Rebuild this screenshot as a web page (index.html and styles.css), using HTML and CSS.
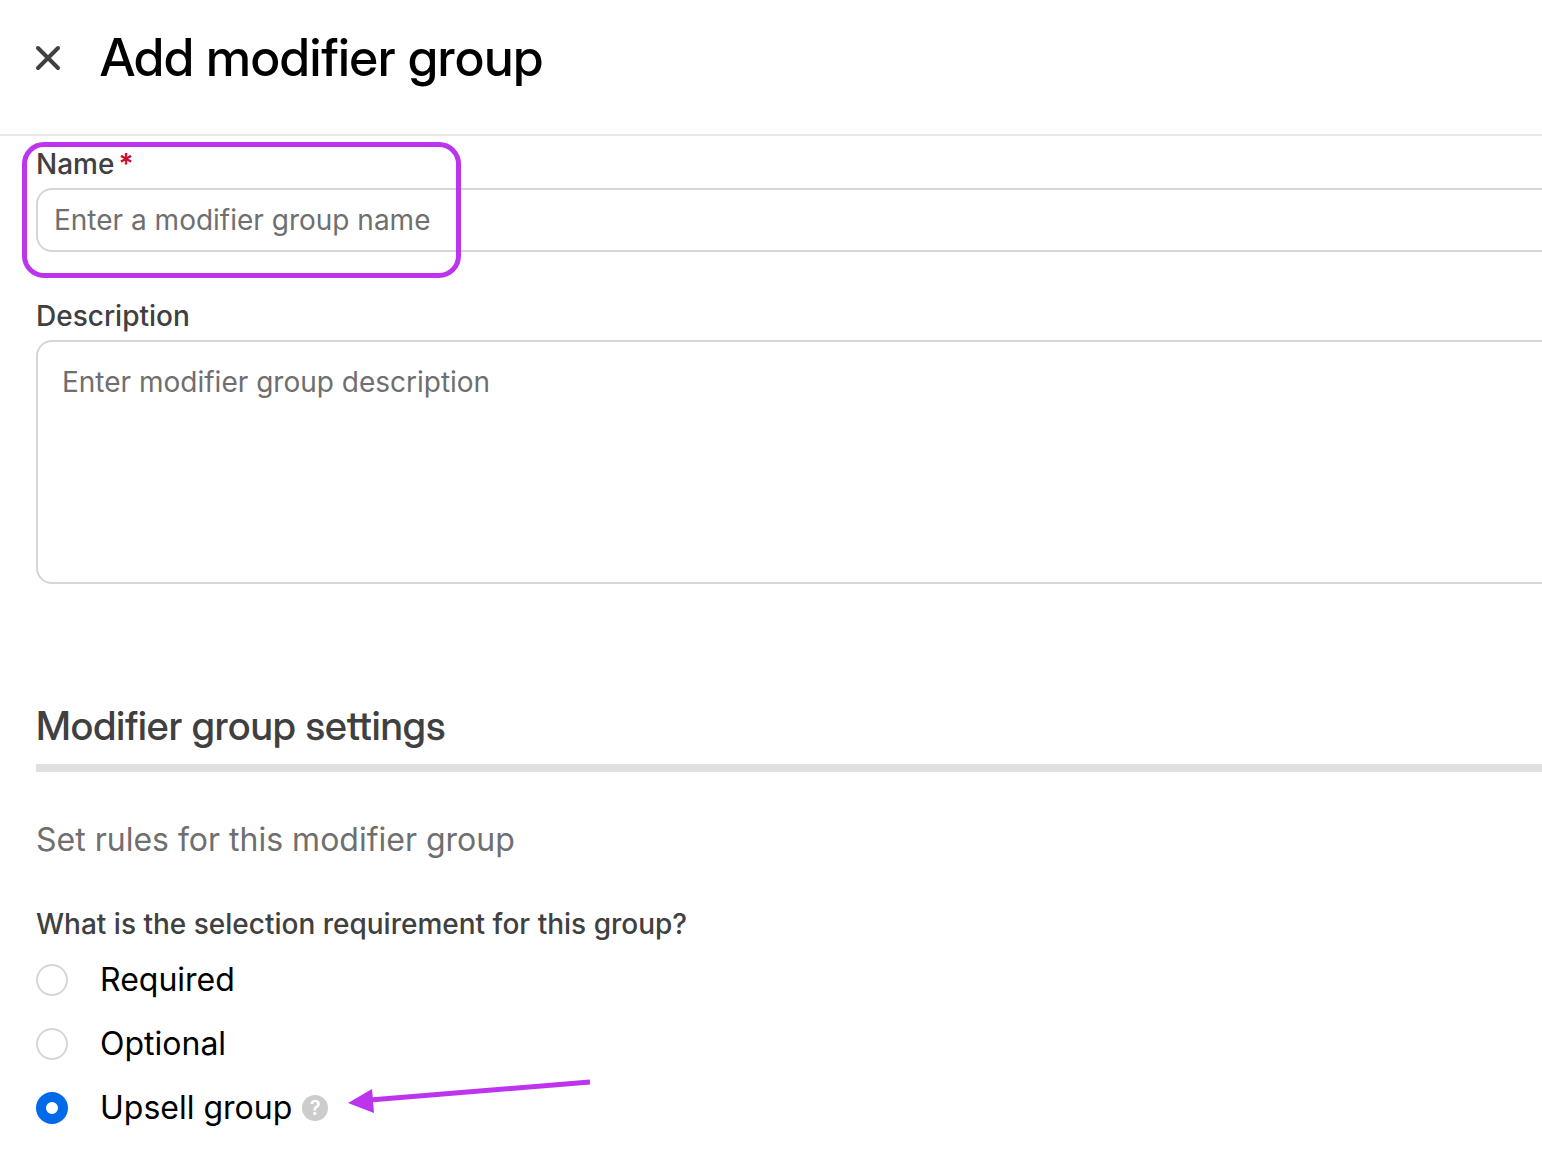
FILE: index.html
```html
<!DOCTYPE html>
<html lang="en">
<head>
  <meta charset="utf-8">
  <title>Add modifier group</title>
  <link rel="stylesheet" href="styles.css">
</head>
<body>
<header class="header">
  <button type="button" class="close-button" aria-label="Close">
    <svg viewBox="0 0 32 32" fill="none" stroke="currentColor" stroke-width="4" stroke-linecap="round">
      <path d="M6 6l20 20M26 6L6 26"/>
    </svg>
  </button>
  <h1>Add modifier group</h1>
</header>

<form class="form">
  <div class="field">
    <label for="groupName">Name<span class="required">*</span></label>
    <input type="text" id="groupName" placeholder="Enter a modifier group name" spellcheck="false">
    <div class="highlight"></div>
  </div>

  <div class="field">
    <label for="groupDescription">Description</label>
    <textarea id="groupDescription" placeholder="Enter modifier group description" spellcheck="false"></textarea>
  </div>

  <h2 class="section-title">Modifier group settings</h2>
  <p class="section-description">Set rules for this modifier group</p>

  <fieldset class="options">
    <legend>What is the selection requirement for this group?</legend>
    <div class="option">
      <input type="radio" name="requirement" id="required">
      <label for="required">Required</label>
    </div>
    <div class="option">
      <input type="radio" name="requirement" id="optional">
      <label for="optional">Optional</label>
    </div>
    <div class="option">
      <input type="radio" name="requirement" id="upsell" checked>
      <label for="upsell">Upsell group</label>
      <button type="button" class="help-button" aria-label="Help">?</button>
      <svg class="arrow" viewBox="0 0 244 36">
        <path d="M22 22L242 4" stroke="currentColor" stroke-width="5"/>
        <path d="M0 25L24 11L26 35z" fill="currentColor"/>
      </svg>
    </div>
  </fieldset>
</form>
</body>
</html>
```
FILE: styles.css
```css
:root {
  --text-color: #404040;
  --muted-color: #6f6f6f;
  --border-color: #d6d6d6;
  --primary-color: #006ae8;
  --highlight-color: #bd34ee;
}

* {
  box-sizing: border-box;
}

body {
  margin: 0;
  overflow-x: hidden;
  font-family: Inter, sans-serif;
  font-size: 32px;
  color: #000000;
  background-color: #ffffff;
}

h1,
h2 {
  font-family: "Inter Display", "Inter Tight", Inter, sans-serif;
  font-weight: 500;
  font-variation-settings: "opsz" 32;
}

.header {
  display: flex;
  align-items: flex-start;
  gap: 36px;
  padding: 30px 32px 48px;
  border-bottom: 2px solid #e8e8e8;
}

.close-button {
  width: 32px;
  height: 56px;
  padding: 0;
  border: none;
  background: none;
  color: var(--text-color);
  cursor: pointer;
}

.close-button svg {
  display: block;
  width: 32px;
  height: 32px;
}

h1 {
  margin: 0;
  font-size: 52px;
  line-height: 56px;
}

.form {
  padding: 8px 0 24px 36px;
}

.field {
  position: relative;
  margin-bottom: 44px;
}

.field label,
legend {
  display: block;
  padding: 0;
  font-size: 28px;
  font-weight: 500;
  line-height: 40px;
  color: var(--text-color);
}

.required {
  margin-left: 4px;
  font-weight: 600;
  color: #cc0d2d;
}

/* fields run off the right side of the panel */
.field input,
.field textarea {
  display: block;
  width: calc(100% + 24px);
  margin-top: 4px;
  border: 2px solid var(--border-color);
  border-radius: 16px;
  background-color: #ffffff;
  font-family: inherit;
  font-size: 28px;
  line-height: 40px;
}

.field input {
  height: 64px;
  padding: 0 16px;
}

.field textarea {
  height: 244px;
  padding: 20px 24px;
  resize: none;
}

::placeholder {
  color: var(--muted-color);
  opacity: 1;
}

.highlight {
  position: absolute;
  top: -2px;
  left: -14px;
  width: 439px;
  height: 136px;
  border: 5px solid var(--highlight-color);
  border-radius: 22px;
  pointer-events: none;
}

.section-title {
  margin: 118px 0 0;
  padding-bottom: 14px;
  border-bottom: 8px solid #e0e0e0;
  font-size: 40px;
  line-height: 48px;
  color: var(--text-color);
}

.section-description {
  margin: 44px 0 40px;
  line-height: 48px;
  color: var(--muted-color);
}

.options {
  margin: 0;
  padding: 0;
  border: none;
}

.option {
  display: flex;
  align-items: center;
  height: 64px;
  line-height: 40px;
}

.options legend {
  margin-bottom: 4px;
}

.option input {
  appearance: none;
  width: 32px;
  height: 32px;
  margin: 0 32px 0 0;
  border: 2px solid var(--border-color);
  border-radius: 50%;
  background-color: #ffffff;
}

.option input:checked {
  border: 10px solid var(--primary-color);
}

.help-button {
  width: 26px;
  height: 26px;
  margin-left: 10px;
  padding: 0;
  border: none;
  border-radius: 50%;
  background-color: #cccccc;
  color: #ffffff;
  font-family: inherit;
  font-size: 20px;
  font-weight: 600;
  line-height: 26px;
}

.arrow {
  width: 244px;
  height: 36px;
  margin: 0 0 24px 20px;
  color: var(--highlight-color);
}
```
